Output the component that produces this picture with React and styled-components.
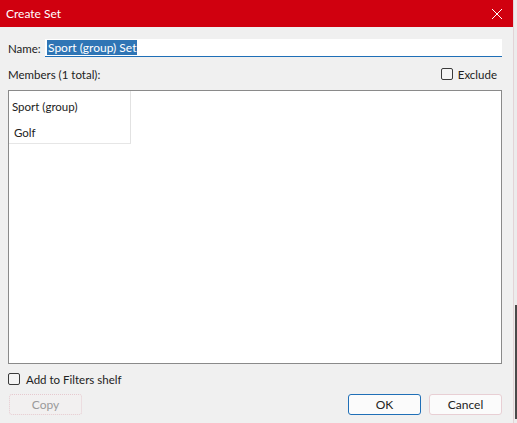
import React from "react";
import styled, { createGlobalStyle } from "styled-components";

const GlobalStyle = createGlobalStyle`
  html, body {
    margin: 0;
    padding: 0;
    background: #f0f0f0;
  }
  * {
    box-sizing: border-box;
  }
`;

const Screen = styled.div`
  width: 517px;
  height: 423px;
  display: flex;
  overflow: hidden;
  font-family: "Segoe UI", Lato, "Noto Sans", sans-serif;
  font-size: 11.5px;
  color: #222222;
`;

const Dialog = styled.div`
  width: 513px;
  height: 100%;
  display: flex;
  flex-direction: column;
  background: #f0f0f0;
`;

const EdgeStrip = styled.div`
  flex: 1;
  display: flex;
  flex-direction: column;
  justify-content: flex-end;
  padding-bottom: 4px;
  background: #ececec;
  border-left: 1px solid #e3d3d6;

  & > div {
    width: 2px;
    height: 114px;
    margin-left: 1px;
    background: #4a4a4a;
  }
`;

const TitleBar = styled.div`
  height: 27px;
  background: #d0000f;
  color: #ffffff;
  display: flex;
  align-items: center;
  justify-content: space-between;
  padding: 0 10px 0 6px;
  font-size: 12px;
`;

const CloseButton = styled.button`
  border: none;
  background: transparent;
  padding: 0;
  width: 12px;
  height: 12px;
  display: flex;
  cursor: pointer;
`;

const Body = styled.div`
  flex: 1;
  display: flex;
  flex-direction: column;
  padding: 12px 11px 0 8px;
`;

const NameRow = styled.div`
  display: flex;
  align-items: center;
  height: 18px;

  & > label {
    width: 37px;
  }
`;

const NameInput = styled.div`
  flex: 1;
  height: 18px;
  background: #ffffff;
  border-bottom: 1px solid #1f6fb7;
  display: flex;
  align-items: center;
  padding-left: 2px;
`;

const Selected = styled.span`
  background: #2f75b5;
  color: #ffffff;
  line-height: 15px;
  padding: 0 1px;
  font-size: 12px;
`;

const MembersRow = styled.div`
  display: flex;
  align-items: center;
  justify-content: space-between;
  height: 22px;
  margin-top: 6px;
  padding-right: 5px;
`;

const CheckLabel = styled.label`
  display: flex;
  align-items: center;
  gap: ${(p) => p.gap || 4}px;
`;

const Box = styled.span`
  width: 12px;
  height: 12px;
  border: 1px solid #3a3a3a;
  border-radius: 2px;
  background: #f4f4f4;
  display: inline-block;
`;

const ListBox = styled.div`
  height: 274px;
  margin-top: 5px;
  background: #ffffff;
  border: 1px solid #8a8a8a;
  display: flex;
  align-items: flex-start;
`;

const MemberColumn = styled.div`
  width: 122px;
  height: 53px;
  border-right: 1px solid #e2e2e2;
  border-bottom: 1px solid #e6e6e6;
  display: flex;
  flex-direction: column;
  padding-top: 3px;
`;

const MemberItem = styled.div`
  height: 26px;
  line-height: 26px;
  padding-left: ${(p) => p.indent}px;
`;

const FiltersRow = styled.div`
  margin-top: 9px;
  height: 12px;
  display: flex;
  align-items: center;
`;

const ButtonRow = styled.div`
  margin-top: 9px;
  display: flex;
  align-items: center;
  padding-left: 1px;
`;

const Button = styled.button`
  width: 73px;
  height: 21px;
  font-family: inherit;
  font-size: 12px;
  border-radius: 3px;
  background: ${(p) => (p.disabled ? "#f2f0f0" : "#fbfbfb")};
  color: ${(p) => (p.disabled ? "#9a9a9a" : "#222222")};
  border: 1px ${(p) => (p.disabled ? "dotted" : "solid")}
    ${(p) => (p.primary ? "#1f6fb7" : p.disabled ? "#e6c9cf" : "#e8cfd4")};
  padding: 0;
  margin-left: ${(p) => p.gap || 0}px;
`;

const Spacer = styled.div`
  flex: 1;
`;

export default function App() {
  return (
    <Screen>
      <GlobalStyle />
      <Dialog>
        <TitleBar>
          <span>Create Set</span>
          <CloseButton aria-label="Close">
            <svg width="12" height="12" viewBox="0 0 12 12">
              <path d="M1 1 L11 11 M11 1 L1 11" stroke="#fff" strokeWidth="1" fill="none" />
            </svg>
          </CloseButton>
        </TitleBar>
        <Body>
          <NameRow>
            <label>Name:</label>
            <NameInput>
              <Selected>Sport (group) Set</Selected>
            </NameInput>
          </NameRow>
          <MembersRow>
            <span>Members (1 total):</span>
            <CheckLabel gap={5}>
              <Box />
              Exclude
            </CheckLabel>
          </MembersRow>
          <ListBox>
            <MemberColumn>
              <MemberItem indent={3}>Sport (group)</MemberItem>
              <MemberItem indent={5}>Golf</MemberItem>
            </MemberColumn>
          </ListBox>
          <FiltersRow>
            <CheckLabel gap={6}>
              <Box />
              Add to Filters shelf
            </CheckLabel>
          </FiltersRow>
          <ButtonRow>
            <Button disabled>Copy</Button>
            <Spacer />
            <Button primary>OK</Button>
            <Button gap={8}>Cancel</Button>
          </ButtonRow>
        </Body>
      </Dialog>
      <EdgeStrip>
        <div />
      </EdgeStrip>
    </Screen>
  );
}
